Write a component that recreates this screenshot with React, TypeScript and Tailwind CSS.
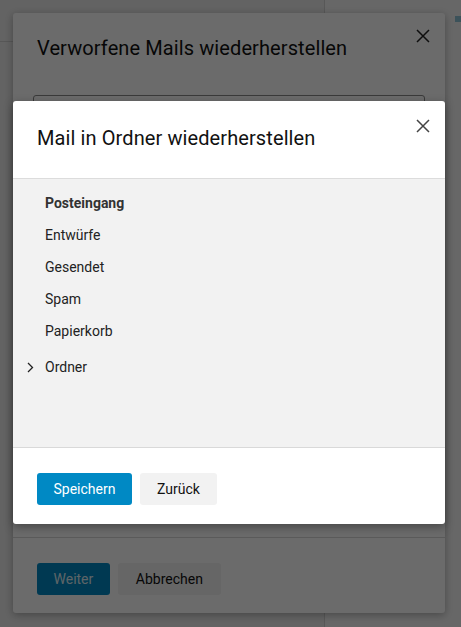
import React from "react";

function CloseIcon({ color = "#444" }: { color?: string }) {
  return (
    <svg width="14" height="14" viewBox="0 0 14 14" fill="none">
      <path d="M1 1 L13 13 M13 1 L1 13" stroke={color} strokeWidth="1.5" />
    </svg>
  );
}

function Chevron() {
  return (
    <svg width="7" height="11" viewBox="0 0 7 11" fill="none">
      <path d="M1 1 L5.5 5.5 L1 10" stroke="#222" strokeWidth="1.3" />
    </svg>
  );
}

export default function App() {
  const items = ["Entwürfe", "Gesendet", "Spam", "Papierkorb"];
  return (
    <div className="relative w-[461px] h-[627px] overflow-hidden font-['Roboto','Liberation_Sans',sans-serif]">
      {/* page behind */}
      <div className="flex h-full">
        <div className="w-[324px] bg-[#ececec] flex flex-col">
          <div className="h-[42px] border-b border-[#cfcfcf]" />
        </div>
        <div className="flex-1 bg-[#f6f6f6] border-l border-[#d2d2d2] flex justify-end pt-[16px]">
          <div className="w-[6px] h-[6px] bg-[#8fc3d6]" />
        </div>
      </div>

      {/* outer dialog */}
      <div className="absolute left-[13px] top-[13px] w-[432px] h-[600px] bg-white rounded-[3px] shadow-[0_2px_8px_rgba(0,0,0,0.3)] flex flex-col">
        <div className="relative px-[24px] pt-[23px]">
          <h2 className="text-[20px] leading-[24px] tracking-[0.1px] text-[#111]">Verworfene Mails wiederherstellen</h2>
          <button className="absolute right-[15px] top-[16px]">
            <CloseIcon color="#222" />
          </button>
        </div>
        <div className="mx-[20px] mt-[35px] h-[40px] border border-[#8a8a8a] rounded-[3px]" />
        <div className="flex-1" />
        <div className="border-t border-[#d6d6d6] pt-[25px] pb-[18px] px-[24px] flex gap-[8px]">
          <button className="h-[32px] px-[16.5px] rounded-[3px] bg-[#0089c4] text-[14px] text-[#dfeef5]">Weiter</button>
          <button className="h-[32px] px-[18px] rounded-[3px] bg-[#f2f2f2] text-[14px] text-[#111]">Abbrechen</button>
        </div>
      </div>

      {/* overlay */}
      <div className="absolute inset-0 bg-black/[0.58]" />

      {/* inner dialog */}
      <div className="absolute left-[13px] top-[101px] w-[432px] h-[423px] bg-white rounded-[3px] shadow-[0_3px_10px_rgba(0,0,0,0.35)] flex flex-col overflow-hidden">
        <div className="relative h-[78px] border-b border-[#dcdcdc] px-[24px] pt-[25px]">
          <h2 className="text-[20px] leading-[24px] tracking-[0.1px] text-[#111]">Mail in Ordner wiederherstellen</h2>
          <button className="absolute right-[15px] top-[18px]">
            <CloseIcon />
          </button>
        </div>
        <div className="flex-1 bg-[#f2f2f2] pt-[8px] border-b border-[#d9d9d9]">
          <div className="h-[32px] flex items-center pl-[32px] text-[14px] font-bold text-[#333]">Posteingang</div>
          {items.map((t) => (
            <div key={t} className="h-[32px] flex items-center pl-[32px] text-[14px] text-[#222]">
              {t}
            </div>
          ))}
          <div className="h-[40px] flex items-center pl-[14px] gap-[12px] text-[14px] text-[#222]">
            <Chevron />
            <span className="-ml-[1px]">Ordner</span>
          </div>
        </div>
        <div className="pt-[25px] pb-[19px] px-[24px] flex gap-[8px]">
          <button className="h-[32px] px-[16.5px] rounded-[3px] bg-[#0089c4] text-[14px] text-white">Speichern</button>
          <button className="h-[32px] px-[17px] rounded-[3px] bg-[#f2f2f2] text-[14px] text-[#111]">Zurück</button>
        </div>
      </div>
    </div>
  );
}
